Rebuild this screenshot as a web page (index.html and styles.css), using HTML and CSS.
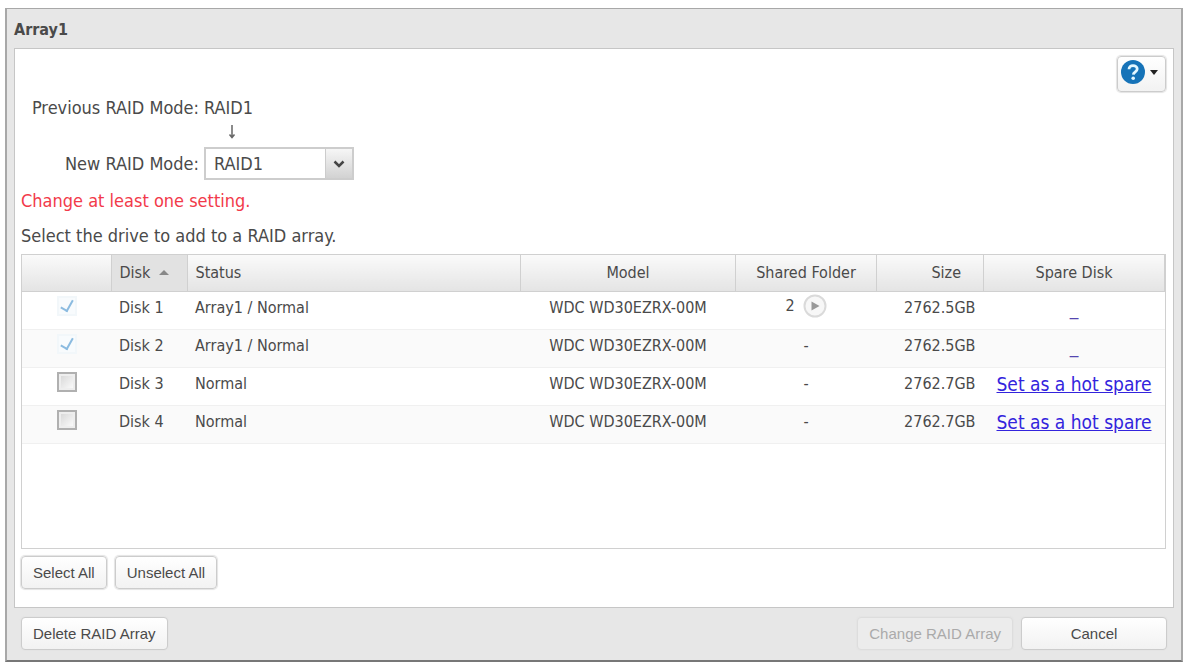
FILE: index.html
```
<!DOCTYPE html>
<html lang="en">
<head>
  <meta charset="UTF-8">
  <title>Array1</title>
  <link rel="stylesheet" href="styles.css">
</head>
<body>

  <main class="window">
    <h1 class="window-title">Array1</h1>

    <form class="panel" id="raid-form">
      <div class="toolbar">
        <button type="button" class="btn help-btn" aria-label="Help">
          <svg width="26" height="26" viewBox="0 0 26 26">
            <circle cx="13" cy="13" r="12" fill="#1673b8"/>
            <path d="M9 10.2C9 7.8 10.7 6.6 13 6.6s4.2 1.3 4.2 3.4c0 2.7-3.7 2.8-3.9 5.6" fill="none" stroke="#e3f7ff" stroke-width="2.8"/>
            <circle cx="13.2" cy="19.2" r="1.8" fill="#e3f7ff"/>
          </svg>
          <svg width="8" height="5" viewBox="0 0 8 5"><path d="M0 0h8L4 5z" fill="#222"/></svg>
        </button>
      </div>

      <div class="modes">
        <span class="mode-label">Previous RAID Mode:</span>
        <span>RAID1</span>
        <svg class="arrow" width="8" height="14" viewBox="0 0 8 14"><path d="M4 0v12M1.5 9.5L4 12.5l2.5-3" fill="none" stroke="#666" stroke-width="1.5"/></svg>
        <label class="mode-label" for="mode">New RAID Mode:</label>
        <div class="select-box">
          <select id="mode">
            <option>RAID1</option>
          </select>
          <span class="select-trigger">
            <svg width="12" height="8" viewBox="0 0 12 8"><path d="M1.5 1.5L6 6l4.500-4.500" fill="none" stroke="#444" stroke-width="2.500"/></svg>
          </span>
        </div>
      </div>

      <p class="warning">Change at least one setting.</p>
      <p class="hint">Select the drive to add to a RAID array.</p>

      <div class="grid">
        <table>
          <colgroup>
            <col class="col-check">
            <col class="col-disk">
            <col>
            <col class="col-model">
            <col class="col-folder">
            <col class="col-size">
            <col class="col-spare">
          </colgroup>
          <thead>
            <tr>
              <th></th>
              <th class="sorted">Disk <svg width="10" height="5" viewBox="0 0 10 5"><path d="M0 5h10L5 0z" fill="#888"/></svg></th>
              <th>Status</th>
              <th class="center">Model</th>
              <th class="center">Shared Folder</th>
              <th class="size-head">Size</th>
              <th class="center">Spare Disk</th>
            </tr>
          </thead>
          <tbody>
            <tr>
              <td class="raised"><input type="checkbox" aria-label="Disk 1" checked disabled></td>
              <td>Disk 1</td>
              <td>Array1 / Normal</td>
              <td class="center">WDC WD30EZRX-00M</td>
              <td class="raised">
                <div class="folders">2
                  <button type="button" class="play" aria-label="Show shared folders">
                    <svg width="24" height="24" viewBox="0 0 24 24">
                      <circle cx="12" cy="12" r="10.500" fill="#f7f7f7" stroke="#dadada" stroke-width="2"/>
                      <path d="M8.500 7.500l8 4.500-8 4.500z" fill="#999"/>
                    </svg>
                  </button>
                </div>
              </td>
              <td class="size">2762.5GB</td>
              <td class="spare"><span class="none">_</span></td>
            </tr>
            <tr>
              <td class="raised"><input type="checkbox" aria-label="Disk 2" checked disabled></td>
              <td>Disk 2</td>
              <td>Array1 / Normal</td>
              <td class="center">WDC WD30EZRX-00M</td>
              <td class="center">-</td>
              <td class="size">2762.5GB</td>
              <td class="spare"><span class="none">_</span></td>
            </tr>
            <tr>
              <td class="raised"><input type="checkbox" aria-label="Disk 3"></td>
              <td>Disk 3</td>
              <td>Normal</td>
              <td class="center">WDC WD30EZRX-00M</td>
              <td class="center">-</td>
              <td class="size">2762.7GB</td>
              <td class="spare"><a href="#">Set as a hot spare</a></td>
            </tr>
            <tr>
              <td class="raised"><input type="checkbox" aria-label="Disk 4"></td>
              <td>Disk 4</td>
              <td>Normal</td>
              <td class="center">WDC WD30EZRX-00M</td>
              <td class="center">-</td>
              <td class="size">2762.7GB</td>
              <td class="spare"><a href="#">Set as a hot spare</a></td>
            </tr>
          </tbody>
        </table>
      </div>

      <div class="grid-buttons">
        <button type="button" class="btn">Select All</button>
        <button type="button" class="btn">Unselect All</button>
      </div>
    </form>

    <footer class="footer">
      <button type="button" class="btn">Delete RAID Array</button>
      <button type="submit" class="btn change" form="raid-form" disabled>Change RAID Array</button>
      <button type="button" class="btn cancel">Cancel</button>
    </footer>
  </main>

</body>
</html>
```
FILE: styles.css
```
* {
  box-sizing: border-box;
}
body {
  margin: 0;
  padding: 8px 2px 0 5px;
  background: #fff;
  color: #4a4a4a;
  font-family: "DejaVu Sans Condensed", "DejaVu Sans", sans-serif;
  font-size: 18px;
  line-height: 20px;
}
.window {
  background: #e7e7e7;
  border: 2px solid #a8a8a8;
  border-top-width: 1px;
  border-bottom-color: #777;
  padding: 0 7px;
}
.window-title {
  margin: 0;
  height: 39px;
  line-height: 42px;
  font-size: 16px;
}
.panel {
  background: #fff;
  border: 1px solid #c6c6c6;
  padding: 7px 7px 18px 6px;
}
.toolbar {
  display: flex;
  justify-content: flex-end;
}
.btn {
  height: 33px;
  padding: 0 11px;
  border: 1px solid #ccc;
  border-radius: 4px;
  box-shadow: 0 0 1px 1px #e4e4e4;
  background: linear-gradient(#fff, #f2f2f2);
  color: #4a4a4a;
  font-family: "Liberation Sans", Arial, sans-serif;
  font-size: 15px;
}
.help-btn {
  display: flex;
  align-items: center;
  justify-content: space-between;
  width: 49px;
  height: 36px;
  padding: 0 7px 4px 2px;
}
.modes {
  display: grid;
  grid-template-columns: 178px 150px;
  column-gap: 5px;
  align-items: center;
  padding-top: 6px;
}
.mode-label {
  text-align: right;
}
.arrow {
  grid-column: 2;
  margin: 7px 0 8px 24px;
}
.select-box {
  display: grid;
  grid-template-columns: 1fr 27px;
  height: 33px;
  border: 2px solid #cdcdcd;
}
.select-box select {
  grid-area: 1 / 1 / 2 / 3;
  appearance: none;
  border: 0;
  padding: 0 8px;
  background: #fff;
  color: #4a4a4a;
  font: inherit;
}
.select-trigger {
  grid-area: 1 / 2;
  display: flex;
  align-items: center;
  justify-content: center;
  background: linear-gradient(#f6f6f6, #d2d2d2);
  border-left: 1px solid #ccc;
  pointer-events: none;
}
.warning,
.hint {
  margin: 0;
}
.warning {
  padding-top: 11px;
  color: #f23a4a;
}
.hint {
  padding: 15px 0 8px;
}
.grid {
  min-height: 295px;
  border: 1px solid #d0d0d0;
}
table {
  width: 100%;
  table-layout: fixed;
  border-collapse: collapse;
  font-size: 16px;
}
.col-check {
  width: 89px;
}
.col-disk {
  width: 76px;
}
.col-model {
  width: 215px;
}
.col-folder {
  width: 141px;
}
.col-size {
  width: 107px;
}
.col-spare {
  width: 181px;
}
th {
  height: 36px;
  padding: 0 8px;
  border-right: 1px solid #d0d0d0;
  border-bottom: 1px solid #d0d0d0;
  background: linear-gradient(#fafafa, #e4e4e4);
  font-weight: normal;
  text-align: left;
}
th.sorted {
  background: #e2e2e2;
}
.sorted svg {
  margin: 0 0 3px 4px;
}
td {
  height: 38px;
  padding: 0 8px 4px;
  border-bottom: 1px solid #f0f0f0;
}
tbody tr:nth-child(even) {
  background: #fafafa;
}
th.center,
td.center {
  text-align: center;
}
/* cells with a control sit a little higher than the text cells */
td.raised {
  padding-bottom: 8px;
}
th.size-head {
  padding-right: 22px;
  text-align: right;
}
td.size {
  text-align: right;
}
td.spare {
  padding: 0 0 4px;
  text-align: center;
  font-size: 19px;
}
.spare a {
  color: #3324dd;
}
.none {
  color: #5546b0;
}
.folders {
  display: flex;
  align-items: center;
  justify-content: center;
  gap: 8px;
}
.play {
  display: flex;
  padding: 0;
  border: 0;
  background: none;
}
input[type="checkbox"] {
  appearance: none;
  display: block;
  width: 20px;
  height: 20px;
  margin: 0 auto;
  border: 2px solid #b0b0b0;
  background: linear-gradient(135deg, #d4d4d4, #fff);
  box-shadow: inset 0 0 0 2px #eee;
}
input[type="checkbox"]:disabled {
  border-color: #f2f7fa;
  background: #f8fbfd;
  box-shadow: none;
}
input[type="checkbox"]:checked::after {
  content: "";
  display: block;
  width: 6px;
  height: 11px;
  margin: 0 auto;
  border: solid #8bbbe0;
  border-width: 0 2px 2px 0;
  transform: rotate(30deg);
}
.grid-buttons {
  display: flex;
  gap: 8px;
  padding-top: 7px;
}
.footer {
  display: flex;
  padding: 9px 7px 10px;
}
.btn.change {
  margin-left: auto;
  margin-right: 8px;
  border-color: #ddd;
  background: #ececec;
  color: #aaa;
}
.btn.cancel {
  width: 146px;
}
```
